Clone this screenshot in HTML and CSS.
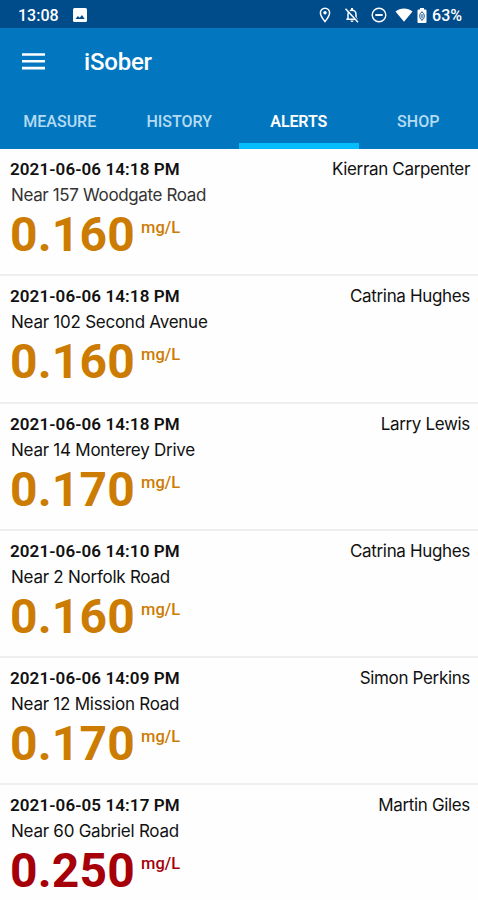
FILE: index.html
```html
<!DOCTYPE html>
<html lang="en">
<head>
    <meta charset="UTF-8">
    <meta name="viewport" content="width=device-width, initial-scale=1.0">
    <title>iSober</title>
    <link rel="stylesheet" href="styles.css">
</head>
<body>
    <div class="status-bar">
        <span class="clock">13:08</span>
        <svg class="icon-picture" width="14" height="14" viewBox="0 0 14 14">
            <rect width="14" height="14" rx="1.5" fill="#fff"/>
            <path d="M2.5 11l2.4-3 1.8 1.8L9 7l2.700 4z" fill="#004b8a"/>
        </svg>
        <div class="status-icons">
            <svg class="icon-pin" width="12" height="16" viewBox="0 0 12 16">
                <path d="M6 1.2a4.6 4.6 0 0 0-4.6 4.6C1.4 9.2 6 14.5 6 14.5s4.6-5.3 4.6-8.7A4.6 4.6 0 0 0 6 1.2z" fill="none" stroke="#fff" stroke-width="1.5"/>
                <circle cx="6" cy="5.8" r="1.7" fill="#fff"/>
            </svg>
            <svg class="icon-bell" width="16" height="16" viewBox="0 0 16 16">
                <path d="M4 12V7.2a4 4 0 0 1 8 0V12M2.3 12.2h11.4" fill="none" stroke="#fff" stroke-width="1.5"/>
                <path d="M7 1h2v2.5H7zM6.5 13.5h3a1.5 1.5 0 0 1-3 0z" fill="#fff"/>
                <path d="M2.6 1.2l12 13.2" stroke="#004b8a" stroke-width="1.5"/>
                <path d="M1.5 1.8l12.5 13.4" stroke="#fff" stroke-width="1.5"/>
            </svg>
            <svg class="icon-dnd" width="16" height="16" viewBox="0 0 16 16">
                <circle cx="8" cy="8" r="6.8" fill="none" stroke="#fff" stroke-width="1.4"/>
                <path d="M4.3 8h7.4" stroke="#fff" stroke-width="1.9"/>
            </svg>
            <svg class="icon-wifi" width="18" height="14" viewBox="0 0 18 14">
                <path d="M.5 3.6C3 1.5 5.8.5 9 .5s6 1 8.500 3.100L9 13.800z" fill="#fff"/>
            </svg>
            <svg class="icon-battery" width="10" height="15" viewBox="0 0 10 15">
                <path d="M3 0h4v1.5h1.5q1 0 1 1V14q0 1-1 1h-7q-1 0-1-1V2.5q0-1 1-1H3z" fill="#fff"/>
                <path d="M5 3.8C3.5 4.8 2.8 6 2.8 8s.7 3.2 2.2 4.4C6.5 11.2 7.2 10 7.2 8S6.5 4.8 5 3.8z" fill="none" stroke="#004b8a" stroke-width="1"/>
                <path d="M5 6v4.5" stroke="#004b8a" stroke-width="1"/>
            </svg>
            <span class="percent">63%</span>
        </div>
    </div>

    <div class="app-bar">
        <svg class="menu-icon" width="23" height="17" viewBox="0 0 23 17">
            <path d="M0 1.5h23M0 8.3h23M0 15.1h23" stroke="#fff" stroke-width="2.600"/>
        </svg>
        <h1>iSober</h1>
    </div>

    <div class="tabs">
        <a class="tab">MEASURE</a>
        <a class="tab">HISTORY</a>
        <a class="tab active">ALERTS</a>
        <a class="tab">SHOP</a>
    </div>

    <div class="alert-list">
        <div class="alert">
            <div class="alert-top"><span class="date">2021-06-06 14:18 PM</span><span class="name">Kierran Carpenter</span></div>
            <div class="place place-muted">Near 157 Woodgate Road</div>
            <div class="reading"><span class="value">0.160</span><span class="unit">mg/L</span></div>
        </div>
        <div class="alert">
            <div class="alert-top"><span class="date">2021-06-06 14:18 PM</span><span class="name">Catrina Hughes</span></div>
            <div class="place">Near 102 Second Avenue</div>
            <div class="reading"><span class="value">0.160</span><span class="unit">mg/L</span></div>
        </div>
        <div class="alert">
            <div class="alert-top"><span class="date">2021-06-06 14:18 PM</span><span class="name">Larry Lewis</span></div>
            <div class="place">Near 14 Monterey Drive</div>
            <div class="reading"><span class="value">0.170</span><span class="unit">mg/L</span></div>
        </div>
        <div class="alert">
            <div class="alert-top"><span class="date">2021-06-06 14:10 PM</span><span class="name">Catrina Hughes</span></div>
            <div class="place">Near 2 Norfolk Road</div>
            <div class="reading"><span class="value">0.160</span><span class="unit">mg/L</span></div>
        </div>
        <div class="alert">
            <div class="alert-top"><span class="date">2021-06-06 14:09 PM</span><span class="name">Simon Perkins</span></div>
            <div class="place">Near 12 Mission Road</div>
            <div class="reading"><span class="value">0.170</span><span class="unit">mg/L</span></div>
        </div>
        <div class="alert danger">
            <div class="alert-top"><span class="date">2021-06-05 14:17 PM</span><span class="name">Martin Giles</span></div>
            <div class="place">Near 60 Gabriel Road</div>
            <div class="reading"><span class="value">0.250</span><span class="unit">mg/L</span></div>
        </div>
    </div>
</body>
</html>
```
FILE: styles.css
```css
* {
    box-sizing: border-box;
    margin: 0;
    padding: 0;
}

body {
    background: #fefefe;
    color: #111;
    font-family: Roboto, sans-serif;
    height: 900px;
    overflow: hidden;
}

svg {
    display: block;
    flex: none;
}

.status-bar {
    display: flex;
    align-items: center;
    height: 28px;
    padding: 2px 16px 0 18px;
    background: #004b8a;
    color: #fff;
    font-size: 16px;
    font-weight: 500;
}

.icon-picture {
    margin-left: 14px;
}

.status-icons {
    display: flex;
    align-items: center;
    margin-left: auto;
}

.icon-bell {
    margin-left: 13px;
}

.icon-dnd {
    margin-left: 11px;
}

.icon-wifi {
    margin-left: 8px;
}

.icon-battery {
    margin-left: 4px;
}

.percent {
    margin-left: 5px;
}

.app-bar {
    display: flex;
    align-items: center;
    height: 67px;
    padding-left: 22px;
    background: #0277bf;
    color: #fff;
}

h1 {
    margin-left: 39px;
    font-size: 24px;
    font-weight: 500;
    letter-spacing: -0.2px;
}

.tabs {
    display: flex;
    height: 54px;
    background: #0277bf;
}

.tab {
    flex: 1;
    padding-top: 1px;
    border-bottom: 6px solid transparent;
    color: #b5dbf3;
    font-size: 16px;
    font-weight: 500;
    line-height: 52px;
    text-align: center;
}

.tab.active {
    border-bottom-color: #03bdfc;
    color: #fff;
    font-weight: 600;
    letter-spacing: -0.1px;
}

.alert {
    height: 127.3px;
    padding: 10px 8px 0 10px;
    border-bottom: 2px solid #eee;
}

.alert-top {
    display: flex;
    justify-content: space-between;
    line-height: 20px;
}

.date {
    font-size: 17px;
    font-weight: 600;
    letter-spacing: 0.1px;
}

.name,
.place {
    font-family: Inter, sans-serif;
    font-size: 17px;
    letter-spacing: -0.34px;
}

.place {
    margin-top: 6px;
    padding-left: 1px;
    letter-spacing: -0.25px;
    line-height: 20px;
}

.place-muted {
    color: #333;
    letter-spacing: -0.36px;
}

.reading {
    display: flex;
    color: #cc7c02;
}

.value {
    font-size: 48px;
    font-weight: 700;
    letter-spacing: 0.2px;
    line-height: 60px;
}

.unit {
    margin-left: 6px;
    padding-top: 13px;
    font-size: 16.5px;
    font-weight: 500;
    line-height: 20px;
}

.danger .reading {
    color: #a60009;
}
```
